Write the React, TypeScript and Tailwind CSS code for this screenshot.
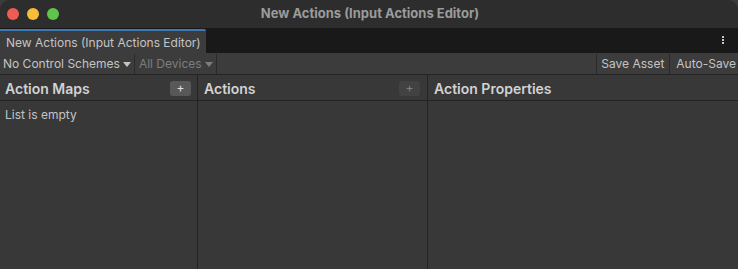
import React from "react";

const font = { fontFamily: "Inter, 'Noto Sans', sans-serif" };

export default function App() {
  return (
    <div className="w-[738px] h-[269px] bg-[#3b3b3b] overflow-hidden" style={font}>
      <div className="w-full h-full flex flex-col rounded-t-[10px] overflow-hidden bg-[#383838]">
        {/* Title bar */}
        <div className="relative h-[28px] shrink-0 bg-[#2d2d2d] flex items-center justify-center">
          <div className="absolute left-[7px] top-[8px] flex gap-[8px]">
            <div className="w-[12px] h-[12px] rounded-full bg-[#ee5c54]" />
            <div className="w-[12px] h-[12px] rounded-full bg-[#f6bd3a]" />
            <div className="w-[12px] h-[12px] rounded-full bg-[#5ec44a]" />
          </div>
          <span className="text-[13px] font-bold text-[#9b9b9b] pl-[2px]">New Actions (Input Actions Editor)</span>
        </div>
        {/* Tab strip */}
        <div className="h-[25px] shrink-0 bg-[#191919] flex items-end justify-between">
          <div className="h-[24px] bg-[#3c3c3c] border-t-[2px] border-[#3f78b0] flex items-center pl-[6px] pr-[5px] pt-[1px] text-[12px] text-[#c4c4c4] rounded-tr-[2px]">
            New Actions (Input Actions Editor)
          </div>
          <div className="h-full flex items-center pr-[14px] text-[#c4c4c4]">
            <div className="flex flex-col gap-[1px] pb-[1px]">
              <div className="w-[2px] h-[2px] bg-[#c4c4c4]" />
              <div className="w-[2px] h-[2px] bg-[#c4c4c4]" />
              <div className="w-[2px] h-[2px] bg-[#c4c4c4]" />
            </div>
          </div>
        </div>
        {/* Toolbar */}
        <div className="h-[22px] shrink-0 bg-[#3c3c3c] border-b border-[#232323] flex items-stretch text-[12px] pt-[1px]">
          <div className="flex items-center gap-[3px] pl-[3px] pr-[3px] text-[#c4c4c4] border-r border-[#2a2a2a]">
            No Control Schemes
            <svg width="8" height="5" viewBox="0 0 8 5"><path d="M0 0h8L4 5z" fill="#c4c4c4" /></svg>
          </div>
          <div className="flex items-center gap-[3px] pl-[4px] pr-[3px] text-[#7d7d7d] border-r border-[#2a2a2a]">
            All Devices
            <svg width="8" height="5" viewBox="0 0 8 5"><path d="M0 0h8L4 5z" fill="#7d7d7d" /></svg>
          </div>
          <div className="flex-1" />
          <div className="flex items-center pl-[4px] pr-[5px] text-[#c4c4c4] border-l border-[#2a2a2a]">Save Asset</div>
          <div className="flex items-center pl-[6px] pr-[2px] text-[#c4c4c4] border-l border-[#2a2a2a]">Auto-Save</div>
        </div>
        {/* Panels */}
        <div className="flex-1 flex min-h-0">
          <div className="w-[198px] shrink-0 flex flex-col border-r border-[#232323]">
            <div className="h-[26px] shrink-0 border-b border-[#232323] flex items-center justify-between pl-[5px] pr-[6px] pt-[1px]">
              <span className="text-[14px] font-semibold text-[#d2d2d2]">Action Maps</span>
              <div className="w-[21px] h-[15px] rounded-[3px] bg-[#585858] flex items-center justify-center text-[12px] leading-none text-[#e0e0e0]">+</div>
            </div>
            <div className="px-[5px] pt-[5px] text-[12px] text-[#c4c4c4]">List is empty</div>
          </div>
          <div className="w-[230px] shrink-0 flex flex-col border-r border-[#232323]">
            <div className="h-[26px] shrink-0 border-b border-[#232323] flex items-center justify-between pl-[6px] pr-[7px] pt-[1px]">
              <span className="text-[14px] font-semibold text-[#d2d2d2]">Actions</span>
              <div className="w-[21px] h-[15px] rounded-[3px] bg-[#424242] flex items-center justify-center text-[12px] leading-none text-[#808080]">+</div>
            </div>
          </div>
          <div className="flex-1 flex flex-col">
            <div className="h-[26px] shrink-0 border-b border-[#232323] flex items-center pl-[6px] pt-[1px]">
              <span className="text-[14px] font-semibold text-[#d2d2d2]">Action Properties</span>
            </div>
          </div>
        </div>
      </div>
    </div>
  );
}
